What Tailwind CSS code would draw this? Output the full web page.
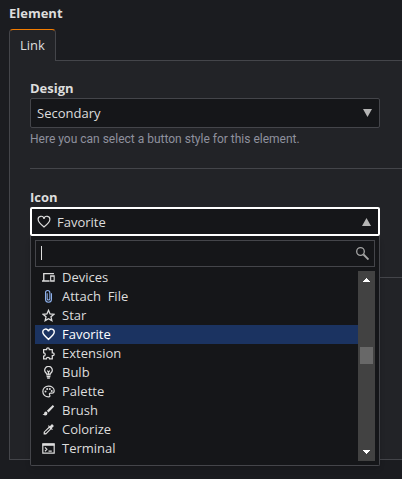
<!DOCTYPE html>
<html lang="en">
<head>
<meta charset="utf-8">
<meta name="viewport" content="width=device-width, initial-scale=1">
<title>Element</title>
<script src="https://cdn.jsdelivr.net/npm/@tailwindcss/browser@4"></script>
</head>
<body class="min-h-screen overflow-x-hidden bg-[#1b1c20] pl-[9px] font-['Open_Sans','Noto_Sans',sans-serif] text-[13px] leading-[19px] text-[#dddddd]">
<main class="pt-1 pb-4">
  <h1 class="font-bold">Element</h1>
  <div class="mt-1.5 flex" role="tablist">
    <button type="button" role="tab" aria-selected="true" class="relative z-10 -mb-px h-8 rounded-t-sm border border-b-0 border-[#44454a] border-t-[#f47c00] bg-[#222327] px-2.5 text-[13px]">Link</button>
  </div>
  <section class="border-y border-l border-[#44454a] bg-[#222327] pt-[18px] pl-5">
    <div class="border-b border-[#44454a] pb-[19px]">
      <label for="design" class="block font-bold">Design</label>
      <div class="relative mr-[22px]">
        <select id="design" class="block h-[30px] w-full appearance-none rounded-xs border border-[#44454a] bg-[#151619] px-1.5 outline-none">
          <option>Secondary</option>
        </select>
        <svg class="pointer-events-none absolute top-[11px] right-2 h-2 w-[9px]" viewBox="0 0 9 8" fill="#b5b5b5"><path d="M0 0h9L4.500 8z"/></svg>
      </div>
      <p class="mt-0.5 font-[Roboto,sans-serif] text-xs leading-[19px] text-[#8f919e]">Here you can select a button style for this element.</p>
    </div>
    <div class="border-b border-[#44454a] pt-[19px] pb-[41px]">
      <label id="icon-label" for="icon" class="block font-bold">Icon</label>
      <div class="relative mr-[22px]">
        <button id="icon" type="button" aria-haspopup="listbox" aria-expanded="true" class="flex h-[29px] w-full items-center rounded-xs border-2 border-white bg-[#151619] px-[5px] pt-0.5 text-left">
          <svg class="mr-1.5 mb-0.5 size-[14px]" viewBox="0 0 24 24" fill="none" stroke="currentColor" stroke-width="2"><path d="M12 20.500C5 14.500 2 12 2 8a5 5 0 0 1 10-1.500A5 5 0 0 1 22 8c0 4-3 6.500-10 12.500z"/></svg>
          <span class="grow">Favorite</span>
          <svg class="mr-0.5 mb-0.5 h-2 w-[9px]" viewBox="0 0 9 8" fill="#b5b5b5"><path d="M0 8h9L4.500 0z"/></svg>
        </button>
        <div class="absolute inset-x-0 top-full z-20 rounded-b-xs border border-t-0 border-[#44454a] bg-[#151619] p-1 shadow-md">
          <div class="relative">
            <input type="text" aria-label="Search icons" class="block h-[27px] w-full border border-[#44454a] bg-[#151619] px-1.5 pr-7 outline-none">
            <span class="pointer-events-none absolute top-1.5 left-1.5 h-[14px] w-px bg-[#dddddd]"></span>
            <svg class="pointer-events-none absolute top-[7px] right-1.5 size-[13px]" viewBox="0 0 13 13" fill="none" stroke="#a5a5a5"><circle cx="4.500" cy="4.500" r="3.800" stroke-width="1.300"/><path d="M7.500 7.500l5 5" stroke-width="1.900"/></svg>
          </div>
          <div class="mt-px flex">
            <ul role="listbox" aria-labelledby="icon-label" class="grow">
              <li role="option" class="flex h-[19px] items-center gap-[7px] pl-[7px]"><svg class="size-[13px]" viewBox="0 0 24 24" fill="currentColor"><path d="M4.500 6H22V3.500H2V17H0v3h14v-3H4.500zM23.500 8H15v12h8.500V8zm-2 9H17v-6.500h4.500z"/></svg>Devices</li>
              <li role="option" class="flex h-[19px] items-center gap-[7px] pl-[7px] whitespace-pre"><svg class="size-[13px] text-[#8fb2ee]" viewBox="0 0 24 24" fill="none" stroke="currentColor" stroke-width="2"><path d="M17.500 6v11a5.500 5.500 0 0 1-11 0V5a4 4 0 0 1 8 0v11a2.500 2.500 0 0 1-5 0V6"/></svg>Attach  File</li>
              <li role="option" class="flex h-[19px] items-center gap-[7px] pl-[7px]"><svg class="size-[13px]" viewBox="0 0 24 24" fill="none" stroke="currentColor" stroke-width="2.400"><path d="M12 2.500l2.900 6.600 7.100.7-5.400 4.700 1.600 7-6.200-3.700-6.200 3.700 1.600-7L2 9.800l7.100-.7z"/></svg>Star</li>
              <li role="option" aria-selected="true" class="flex h-[19px] items-center gap-[7px] bg-[#1b3361] pl-[7px] text-white"><svg class="size-[13px]" viewBox="0 0 24 24" fill="none" stroke="currentColor" stroke-width="2.500"><path d="M12 21C5 15 1.500 12 1.500 8A5.200 5.200 0 0 1 12 6.500 5.200 5.200 0 0 1 22.500 8c0 4-3.500 7-10.500 13z"/></svg>Favorite</li>
              <li role="option" class="flex h-[19px] items-center gap-[7px] pl-[7px]"><svg class="size-[13px]" viewBox="0 0 24 24" fill="none" stroke="currentColor" stroke-width="2.300"><path d="M3 5h5.500V4a2.500 2.500 0 0 1 5 0v1H19v6h1a2.500 2.500 0 0 1 0 5h-1v6h-5c0-4-6-4-6 0H3v-5c4 0 4-6 0-6z"/></svg>Extension</li>
              <li role="option" class="flex h-[19px] items-center gap-[7px] pl-[7px]"><svg class="size-[13px]" viewBox="0 0 24 24" fill="none" stroke="currentColor" stroke-width="2.300"><path d="M9 16.500v-2.500a7 7 0 1 1 6 0v2.500zM12 15v-4m-2.500-2.500l2.500 2.500 2.500-2.500M8.500 19.500h7M9.500 22.300h5"/></svg>Bulb</li>
              <li role="option" class="flex h-[19px] items-center gap-[7px] pl-[7px]"><svg class="size-[13px]" viewBox="0 0 24 24" fill="none" stroke="currentColor" stroke-width="2.200"><path d="M12 2C6 2 1.500 6.500 1.500 12S6 22 12 22c3 0 3-2 2-4s0-3 2-3h2.500c2.500 0 4-2 4-4.500C22.500 5.500 18 2 12 2z"/><g fill="currentColor" stroke="none"><circle cx="6.500" cy="12" r="1.800"/><circle cx="9.500" cy="7.500" r="1.800"/><circle cx="14.500" cy="7.500" r="1.800"/><circle cx="18" cy="11" r="1.800"/></g></svg>Palette</li>
              <li role="option" class="flex h-[19px] items-center gap-[7px] pl-[7px]"><svg class="size-[13px]" viewBox="0 0 24 24" fill="currentColor"><path d="M7 14a3 3 0 0 0-3 3c0 1.500-1.200 2-3 2 1 1.300 3 2 5 2a4 4 0 0 0 4-4 3 3 0 0 0-3-3zM22.500 4.500L20 2 9 12.500l3 3z"/></svg>Brush</li>
              <li role="option" class="flex h-[19px] items-center gap-[7px] pl-[7px]"><svg class="size-[13px]" viewBox="0 0 24 24" fill="currentColor"><path d="M22 5.500L18.500 2l-4 4-2-2L11 5.500 12.500 7 3 16.500V21h4.500L17 11.500l1.500 1.500 1.500-1.500-2-2zM6.700 19L5 17.300 13.500 9l1.500 1.500z"/></svg>Colorize</li>
              <li role="option" class="flex h-[19px] items-center gap-[7px] pl-[7px]"><svg class="size-[13px]" viewBox="0 0 24 24" fill="none" stroke="currentColor" stroke-width="2.200"><path d="M1.500 3.500h21v17h-21z"/><path d="M1 5h22" stroke-width="4"/><path d="M5.500 10l3.500 3.500L5.500 17M12 17h6"/></svg>Terminal</li>
            </ul>
            <div aria-hidden="true" class="mt-[3px] flex h-[190px] w-[17px] shrink-0 flex-col items-center bg-[#424242]">
              <svg class="mt-[7px] h-1 w-[7px]" viewBox="0 0 7 4" fill="#fff" shape-rendering="crispEdges"><path d="M0 4h7L3.500 0z"/></svg>
              <div class="mt-[65px] h-[17px] w-[13px] bg-[#686868]"></div>
              <svg class="mt-auto mb-[7px] h-1 w-[7px]" viewBox="0 0 7 4" fill="#fff" shape-rendering="crispEdges"><path d="M0 0h7L3.500 4z"/></svg>
            </div>
          </div>
        </div>
      </div>
    </div>
    <div class="h-[181px]"></div>
  </section>
</main>
</body>
</html>
